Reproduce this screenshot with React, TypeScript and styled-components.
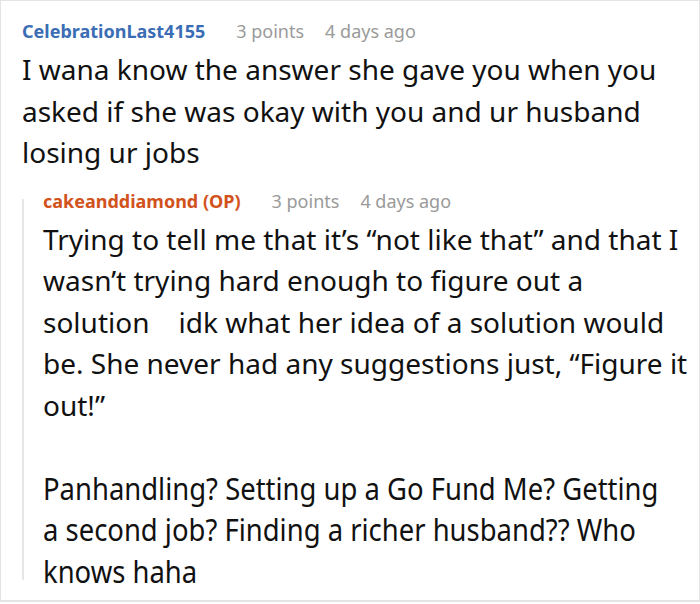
import React from "react";
import styled, { createGlobalStyle } from "styled-components";

const GlobalStyle = createGlobalStyle`
    html, body {
        margin: 0;
        padding: 0;
        background: #ffffff;
    }
    body {
        font-family: "Noto Sans", "Open Sans", sans-serif;
        color: #1a1a1b;
    }
`;

const Frame = styled.div`
    box-sizing: border-box;
    width: 700px;
    height: 602px;
    border: 1px solid #e4e4e4;
    border-bottom-width: 2px;
    padding: 17px 0 0 21px;
    overflow: hidden;
`;

const Comment = styled.div`
    display: flex;
    flex-direction: column;
`;

const Reply = styled(Comment)`
    position: relative;
    margin-top: 14px;
    padding-left: 21px;

    &::before {
        content: "";
        position: absolute;
        left: 0;
        top: 11px;
        bottom: 12px;
        width: 2px;
        background: #e6e6e6;
    }
`;

const Meta = styled.div`
    display: flex;
    align-items: baseline;
    gap: 21px;
    font-size: 18px;
    line-height: 26px;
`;

const Author = styled.span<{ $op?: boolean }>`
    font-weight: 700;
    color: ${({ $op }) => ($op ? "#d2521c" : "#3b6db5")};
    margin-right: 10px;
`;

const Muted = styled.span`
    color: #9a9a9a;
`;

const Body = styled.p`
    margin: 5px 0 0;
    font-size: 28px;
    line-height: 41.5px;
    color: #111;
`;

/* the last paragraph in the shot is squeezed sideways */
const SqueezedBody = styled(Body)`
    margin: 0;
    font-size: 31px;
    width: 714px;
    transform: scaleX(0.885);
    transform-origin: left top;
`;

const Gap = styled.div`
    height: 41.5px;
`;

export default function App() {
    return (
        <>
            <GlobalStyle />
            <Frame>
                <Comment>
                    <Meta>
                        <Author>CelebrationLast4155</Author>
                        <Muted>3 points</Muted>
                        <Muted>4 days ago</Muted>
                    </Meta>
                    <Body>
                        I wana know the answer she gave you when you asked if she was okay with you and ur husband
                        losing ur jobs
                    </Body>
                    <Reply>
                        <Meta>
                            <Author $op>cakeanddiamond (OP)</Author>
                            <Muted>3 points</Muted>
                            <Muted>4 days ago</Muted>
                        </Meta>
                        <Body>
                            Trying to tell me that it’s “not like that” and that I wasn’t trying hard enough to figure
                            out a solution&nbsp;&nbsp;&nbsp; idk what her idea of a solution would be. She never had any
                            suggestions just, “Figure it out!”
                        </Body>
                        <Gap />
                        <SqueezedBody>
                            Panhandling? Setting up a Go Fund Me? Getting a second job? Finding a richer husband?? Who
                            knows haha
                        </SqueezedBody>
                    </Reply>
                </Comment>
            </Frame>
        </>
    );
}
